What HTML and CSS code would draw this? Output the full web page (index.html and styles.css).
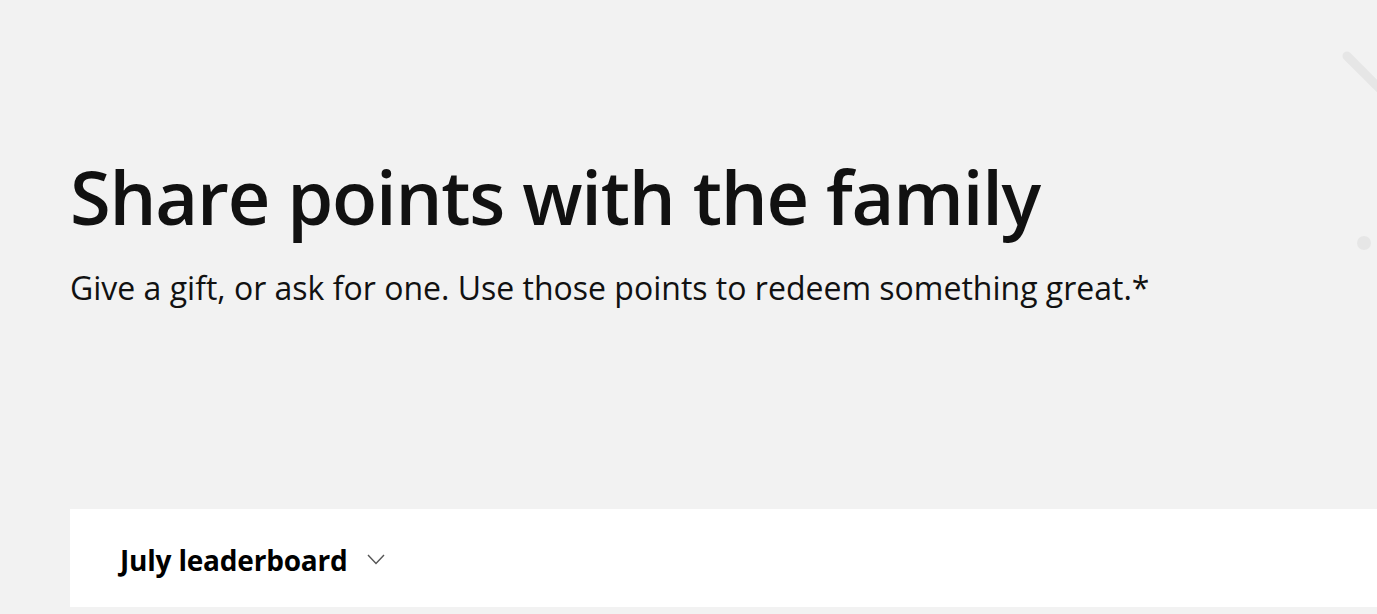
FILE: index.html
```html
<!DOCTYPE html>
<html lang="en">
<head>
<meta charset="utf-8">
<title>Share points with the family</title>
<link rel="stylesheet" href="styles.css">
</head>
<body>
<div class="page">
  <svg class="deco" width="60" height="240" viewBox="0 0 60 240" aria-hidden="true">
    <line x1="30" y1="30" x2="80" y2="80" stroke="#e6e6e6" stroke-width="9" stroke-linecap="round"/>
    <circle cx="47" cy="217" r="7" fill="#e6e6e6"/>
  </svg>
  <section class="hero">
    <h1 class="title">Share points with the family</h1>
    <p class="subtitle">Give a gift, or ask for one. Use those points to redeem something great.*</p>
  </section>
  <section class="card">
    <button class="board-toggle" type="button">
      <span class="board-label">July leaderboard</span>
      <svg class="chevron" width="18" height="11" viewBox="0 0 18 11" aria-hidden="true">
        <polyline points="1,1 9,9.5 17,1" fill="none" stroke="#555" stroke-width="1.4"/>
      </svg>
    </button>
  </section>
</div>
</body>
</html>
```

FILE: styles.css
```css
html, body {
  margin: 0;
  padding: 0;
}
body {
  background: #f2f2f2;
  color: #111;
  font-family: "Open Sans", "Noto Sans", "Liberation Sans", sans-serif;
  overflow: hidden;
}
.page {
  position: relative;
  width: 1377px;
  height: 614px;
  overflow: hidden;
}
.deco {
  position: absolute;
  top: 26px;
  right: 0;
}
.hero {
  padding: 151px 0 0 70px;
  height: 509px;
  box-sizing: border-box;
}
.title {
  margin: 0;
  font-size: 74px;
  font-weight: 600;
  line-height: 92px;
  letter-spacing: -1.2px;
  color: #111;
  white-space: nowrap;
}
.subtitle {
  margin: 25px 0 0 0;
  font-size: 32px;
  font-weight: 400;
  line-height: 40px;
  letter-spacing: 0;
  color: #111;
  white-space: nowrap;
}
.card {
  margin-left: 70px;
  height: 98px;
  background: #fff;
  display: flex;
  align-items: center;
  padding-left: 50px;
}
.board-toggle {
  display: flex;
  align-items: center;
  gap: 19px;
  background: none;
  border: 0;
  padding: 0;
  margin-top: 4px;
  font: inherit;
  color: #000;
  cursor: pointer;
}
.board-label {
  font-size: 28px;
  font-weight: 700;
  letter-spacing: -0.2px;
}
.chevron {
  display: block;
  margin-top: -2px;
}
```
